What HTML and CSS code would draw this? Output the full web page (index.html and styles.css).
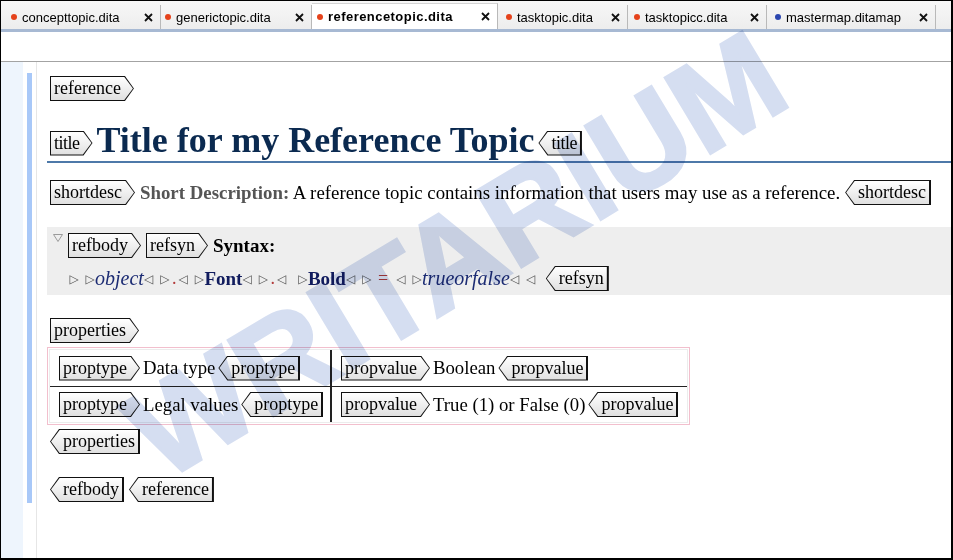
FILE: index.html
```html
<!DOCTYPE html>
<html>
<head>
<meta charset="utf-8">
<title>referencetopic.dita</title>
<link rel="stylesheet" href="styles.css">
</head>
<body>
<div class="window">
  <div class="tabbar">
    <div class="tab t1"><span class="dot"></span><span class="tab-label">concepttopic.dita</span><svg class="close" width="9" height="9" viewBox="0 0 9 9"><path d="M1 1L8 8M8 1L1 8"/></svg></div>
    <div class="tab t2"><span class="dot"></span><span class="tab-label">generictopic.dita</span><svg class="close" width="9" height="9" viewBox="0 0 9 9"><path d="M1 1L8 8M8 1L1 8"/></svg></div>
    <div class="tab t3 active"><span class="dot"></span><span class="tab-label">referencetopic.dita</span><svg class="close" width="9" height="9" viewBox="0 0 9 9"><path d="M1 1L8 8M8 1L1 8"/></svg></div>
    <div class="tab t4"><span class="dot"></span><span class="tab-label">tasktopic.dita</span><svg class="close" width="9" height="9" viewBox="0 0 9 9"><path d="M1 1L8 8M8 1L1 8"/></svg></div>
    <div class="tab t5"><span class="dot"></span><span class="tab-label">tasktopicc.dita</span><svg class="close" width="9" height="9" viewBox="0 0 9 9"><path d="M1 1L8 8M8 1L1 8"/></svg></div>
    <div class="tab t6"><span class="dot blue"></span><span class="tab-label">mastermap.ditamap</span><svg class="close" width="9" height="9" viewBox="0 0 9 9"><path d="M1 1L8 8M8 1L1 8"/></svg></div>
  </div>
  <div class="toolbar"></div>
  <div class="main">
    <div class="gutter"></div>
    <div class="margin"><div class="bluebar"></div></div>
    <div class="doc">
      <div class="line l-ref"><span class="tag"><span>reference</span></span></div>

      <div class="title-row">
        <span class="tag tag-title"><span>title</span></span>
        <h1 class="title">Title for my Reference Topic</h1>
        <span class="tag end tag-title"><span>title</span></span>
      </div>

      <div class="line l-short">
        <span class="tag"><span>shortdesc</span></span>
        <span class="text"><b class="sd-label">Short Description:</b> A reference topic contains information that users may use as a reference.</span>
        <span class="tag end"><span>shortdesc</span></span>
      </div>

      <div class="refbody">
        <div class="line l-syn">
          <svg class="fold" width="10" height="8" viewBox="0 0 10 8"><path d="M0.5 0.5H9.5L5 7.5Z"/></svg>
          <span class="tag"><span>refbody</span></span>
          <span class="tag"><span>refsyn</span></span>
          <b class="syntax">Syntax:</b>
        </div>
        <div class="line l-code">
          <span class="mk">▷</span><span class="sp"></span><span class="mk">▷</span><i class="var">object</i><span class="mk">◁</span><span class="sp"></span><span class="mk">▷</span><span class="delim">.</span><span class="mk">◁</span><span class="sp"></span><span class="mk">▷</span><b class="kwd">Font</b><span class="mk">◁</span><span class="sp"></span><span class="mk">▷</span><span class="delim">.</span><span class="mk">◁</span><span class="sp wide"></span><span class="mk">▷</span><b class="kwd">Bold</b><span class="mk">◁</span><span class="sp"></span><span class="mk">▷</span><span class="delim eq">=</span><span class="mk">◁</span><span class="sp"></span><span class="mk">▷</span><i class="var">trueorfalse</i><span class="mk">◁</span><span class="sp"></span><span class="mk">◁</span>
          <span class="tag end"><span>refsyn</span></span>
        </div>
      </div>

      <div class="line l-props"><span class="tag"><span>properties</span></span></div>

      <div class="props">
        <div class="props-grid">
          <div class="cell c1 r1"><span class="tag"><span>proptype</span></span><span class="text">Data type</span><span class="tag end"><span>proptype</span></span></div>
          <div class="cell c2 r1"><span class="tag"><span>propvalue</span></span><span class="text">Boolean</span><span class="tag end"><span>propvalue</span></span></div>
          <div class="cell c1 r2"><span class="tag"><span>proptype</span></span><span class="text">Legal values</span><span class="tag end"><span>proptype</span></span></div>
          <div class="cell c2 r2"><span class="tag"><span>propvalue</span></span><span class="text">True (1) or False (0)</span><span class="tag end"><span>propvalue</span></span></div>
        </div>
      </div>

      <div class="line l-propsend"><span class="tag end"><span>properties</span></span></div>

      <div class="line l-end">
        <span class="tag end"><span>refbody</span></span>
        <span class="tag end"><span>reference</span></span>
      </div>
    </div>
  </div>
  <div class="watermark">WRITARIUM</div>
</div>
</body>
</html>
```

FILE: styles.css
```css
* { box-sizing: border-box; }
html, body { margin: 0; padding: 0; background: #fff; }

.window {
  width: 953px;
  height: 560px;
  border-style: solid;
  border-color: #000;
  border-width: 1px 2px 2px 1px;
  position: relative;
  overflow: hidden;
  display: flex;
  flex-direction: column;
  font-family: "Liberation Serif", "Times New Roman", serif;
  background: #fff;
}

/* ---------- tab bar ---------- */
.tabbar {
  height: 31px;
  flex: none;
  display: flex;
  align-items: flex-end;
  background: linear-gradient(#f7f7f7, #ededed);
  border-bottom: 3px solid #a7b9d3;
}
.tab {
  height: 24px;
  display: flex;
  align-items: center;
  padding: 0 7px 0 6px;
  border-right: 1px solid #b9b9b9;
  font-family: "Liberation Sans", Arial, sans-serif;
  font-size: 13px;
  color: #000;
}
.tab.t1 { width: 160px; padding-left: 10px; }
.tab.t2 { width: 151px; padding-left: 4px; }
.tab.t3 { width: 186px; padding-left: 5px; }
.tab.t4 { width: 130px; padding-left: 8px; }
.tab.t5 { width: 139px; padding-left: 6px; }
.tab.t6 { width: 169px; padding-left: 8px; }
.tab.active {
  background: #fff;
  height: 26px;
  border-top: 1px solid #d4d4d4;
}
.tab.active .tab-label { font-weight: bold; letter-spacing: 0.45px; }
.dot {
  width: 6px;
  height: 6px;
  border-radius: 50%;
  background: #e5421b;
  margin-right: 5px;
  flex: none;
}
.dot.blue { background: #2c47b0; }
.tab-label { white-space: nowrap; }
.close {
  margin-left: auto;
  flex: none;
}
.close path { stroke: #111; stroke-width: 1.8; fill: none; }

.toolbar {
  height: 30px;
  flex: none;
  background: #fff;
  border-bottom: 1px solid #a3a3a3;
}

/* ---------- main editor ---------- */
.main {
  flex: 1;
  display: flex;
  min-height: 0;
}
.gutter {
  width: 22px;
  flex: none;
  background: #eef5fd;
}
.margin {
  width: 14px;
  flex: none;
  background: #fff;
  border-right: 1px solid #e6e6e6;
  padding-top: 11px;
}
.bluebar {
  margin-left: 4px;
  width: 5px;
  height: 430px;
  background: #a8c8f8;
}
.doc {
  flex: 1;
  padding: 14px 0 0 10px;
  color: #000;
  font-size: 18px;
}

.line {
  display: flex;
  align-items: center;
  height: 25px;
  padding-left: 3px;
  gap: 5px;
}

/* ---------- tags ---------- */
.tag {
  display: inline-block;
  flex: none;
  background: #111;
  padding: 1px;
  clip-path: polygon(0 0, calc(100% - 9px) 0, 100% 50%, calc(100% - 9px) 100%, 0 100%);
}
.tag > span {
  display: block;
  background: linear-gradient(#ffffff, #e0e0e0);
  padding: 1px 12px 1px 3px;
  font-size: 18px;
  line-height: 21px;
  color: #000;
  white-space: nowrap;
  clip-path: polygon(0 0, calc(100% - 8.6px) 0, 100% 50%, calc(100% - 8.6px) 100%, 0 100%);
}
.tag.end {
  padding: 1px 2px 1px 1px;
  clip-path: polygon(9px 0, 100% 0, 100% 100%, 9px 100%, 0 50%);
}
.tag.end > span {
  padding: 1px 3px 1px 12px;
  clip-path: polygon(8.6px 0, 100% 0, 100% 100%, 8.6px 100%, 0 50%);
}
.tag.tag-title > span {
  letter-spacing: -0.5px;
}

/* ---------- title ---------- */
.title-row {
  margin-top: 24px;
  height: 38px;
  display: flex;
  align-items: center;
  gap: 4px;
  padding-left: 3px;
  border-bottom: 2px solid #4d79a9;
}
.title {
  margin: 0 0 6px 0;
  font-size: 36px;
  line-height: 32px;
  font-weight: bold;
  color: #0b2a50;
  white-space: nowrap;
}

/* ---------- short description ---------- */
.l-short { margin-top: 17px; }
.l-short .text { white-space: nowrap; font-size: 18.85px; }
.sd-label { color: #555; }

/* ---------- refbody / refsyn ---------- */
.refbody {
  margin-top: 22px;
  background: #eeeeee;
  padding: 6px 0 4px 6px;
}
.refbody .line { padding-left: 0; }
.fold { align-self: flex-start; margin-top: 1px; margin-right: 0; }
.fold path { fill: none; stroke: #9a9a9a; stroke-width: 1; }
.syntax { color: #000; font-size: 19px; }
.l-code {
  margin-top: 8px;
  padding-left: 16px !important;
  gap: 0;
}
.l-code .tag { margin-left: 10px; }
.mk {
  display: inline-block;
  width: 10px;
  text-align: center;
  font-family: "DejaVu Sans", sans-serif;
  font-size: 12px;
  line-height: 14px;
  color: #555;
}
.sp { width: 6px; }
.sp.wide { width: 11px; }
.var { color: #1b2b73; font-size: 20px; }
.kwd { color: #111c5e; font-size: 19px; }
.delim { color: #b23a3a; padding: 0 2px; }
.delim.eq { padding: 0 8px 0 6px; }

/* ---------- properties table ---------- */
.l-props { margin-top: 23px; }
.props {
  margin-top: 4px;
  width: 643px;
  border: 1px solid #f2bfcd;
  padding: 1px;
}
.props-grid {
  display: grid;
  grid-template-columns: 282px 1fr;
  border: 1px solid #ececec;
}
.cell {
  display: flex;
  align-items: center;
  gap: 3px;
  padding-left: 9px;
}
.cell.r1 { height: 37px; border-bottom: 1.5px solid #222; }
.cell.r2 { height: 35px; }
.cell.c1 { border-right: 2px solid #222; }
.cell .text { white-space: nowrap; font-size: 18.75px; }

.l-propsend { margin-top: 4px; }
.l-end { margin-top: 23px; }

/* ---------- watermark ---------- */
.watermark {
  position: absolute;
  left: 455px;
  top: 254px;
  transform: translate(-50%, -50%) rotate(-31deg);
  font-family: "Liberation Sans", Arial, sans-serif;
  font-weight: bold;
  font-size: 128px;
  line-height: 1;
  color: #d5def1;
  -webkit-text-stroke: 3px #d5def1;
  mix-blend-mode: multiply;
  white-space: nowrap;
  pointer-events: none;
}
```
